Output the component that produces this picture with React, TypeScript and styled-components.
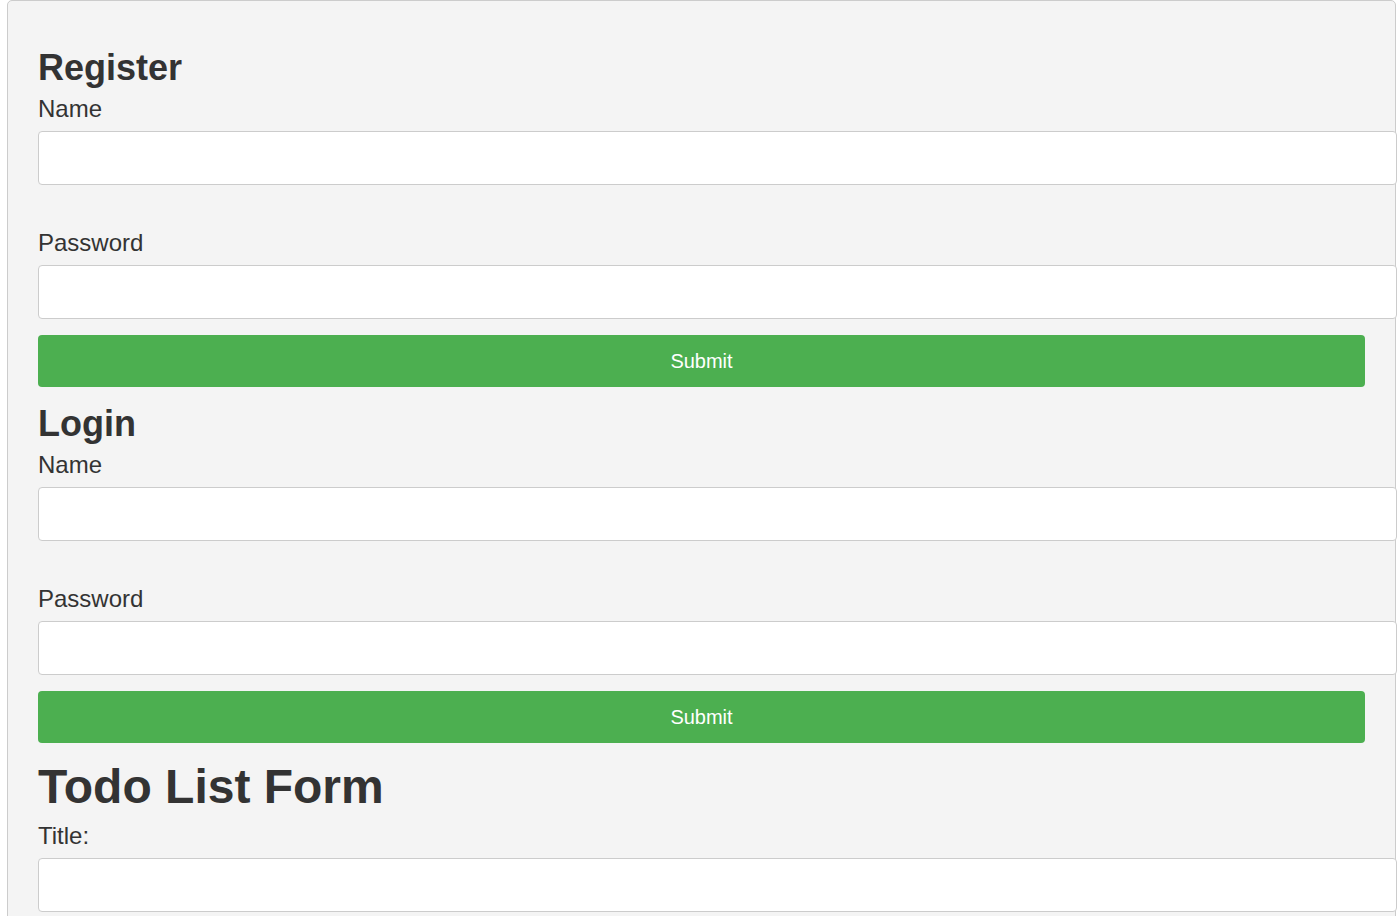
import React from "react";
import styled, { createGlobalStyle } from "styled-components";

const GlobalStyle = createGlobalStyle`
  html, body {
    margin: 0;
    padding: 0;
    overflow: hidden;
    background: #ffffff;
    font-family: "Liberation Sans", Arial, Helvetica, sans-serif;
    color: #333333;
  }
  * { box-sizing: border-box; }
`;

const Container = styled.div`
  margin: 0 2px 0 7px;
  padding: 30px;
  background: #f4f4f4;
  border: 1px solid #cccccc;
  border-radius: 5px;
  display: flex;
  flex-direction: column;
`;

const Form = styled.form`
  display: flex;
  flex-direction: column;
  align-items: flex-start;
`;

const SectionTitle = styled.h2<{ $large?: boolean }>`
  margin: 15px 0 6px;
  font-size: ${(p) => (p.$large ? "48px" : "36px")};
  line-height: ${(p) => (p.$large ? "57.6px" : "43px")};
  font-weight: 700;
  color: #333333;
`;

const Field = styled.div<{ $last?: boolean }>`
  display: flex;
  flex-direction: column;
  align-self: stretch;
  margin-bottom: ${(p) => (p.$last ? "16px" : "44px")};
`;

const Label = styled.label`
  display: block;
  font-size: 24px;
  line-height: 28px;
  margin-bottom: 8px;
  color: #333333;
`;

const Input = styled.input`
  box-sizing: border-box;
  width: calc(100% + 32px);
  height: 54px;
  padding: 0 16px;
  margin: 0;
  border: 1px solid #cccccc;
  border-radius: 4px;
  background: #ffffff;
  font-family: inherit;
  font-size: 20px;
  color: #333333;
  outline: none;
`;

const SubmitButton = styled.button`
  align-self: stretch;
  height: 52px;
  border: none;
  border-radius: 4px;
  background: #4caf50;
  color: #ffffff;
  font-family: "Liberation Sans", Arial, Helvetica, sans-serif;
  font-size: 20px;
  cursor: pointer;
  padding: 0;
`;

const AuthForm: React.FC<{ title: string }> = ({ title }) => (
  <Form onSubmit={(e) => e.preventDefault()}>
    <SectionTitle>{title}</SectionTitle>
    <Field>
      <Label>Name</Label>
      <Input type="text" />
    </Field>
    <Field $last>
      <Label>Password</Label>
      <Input type="password" />
    </Field>
    <SubmitButton type="submit">Submit</SubmitButton>
  </Form>
);

export default function App() {
  return (
    <>
      <GlobalStyle />
      <Container>
        <AuthForm title="Register" />
        <AuthForm title="Login" />
        <Form onSubmit={(e) => e.preventDefault()}>
          <SectionTitle as="h1" $large>
            Todo List Form
          </SectionTitle>
          <Field $last>
            <Label>Title:</Label>
            <Input type="text" />
          </Field>
        </Form>
      </Container>
    </>
  );
}
